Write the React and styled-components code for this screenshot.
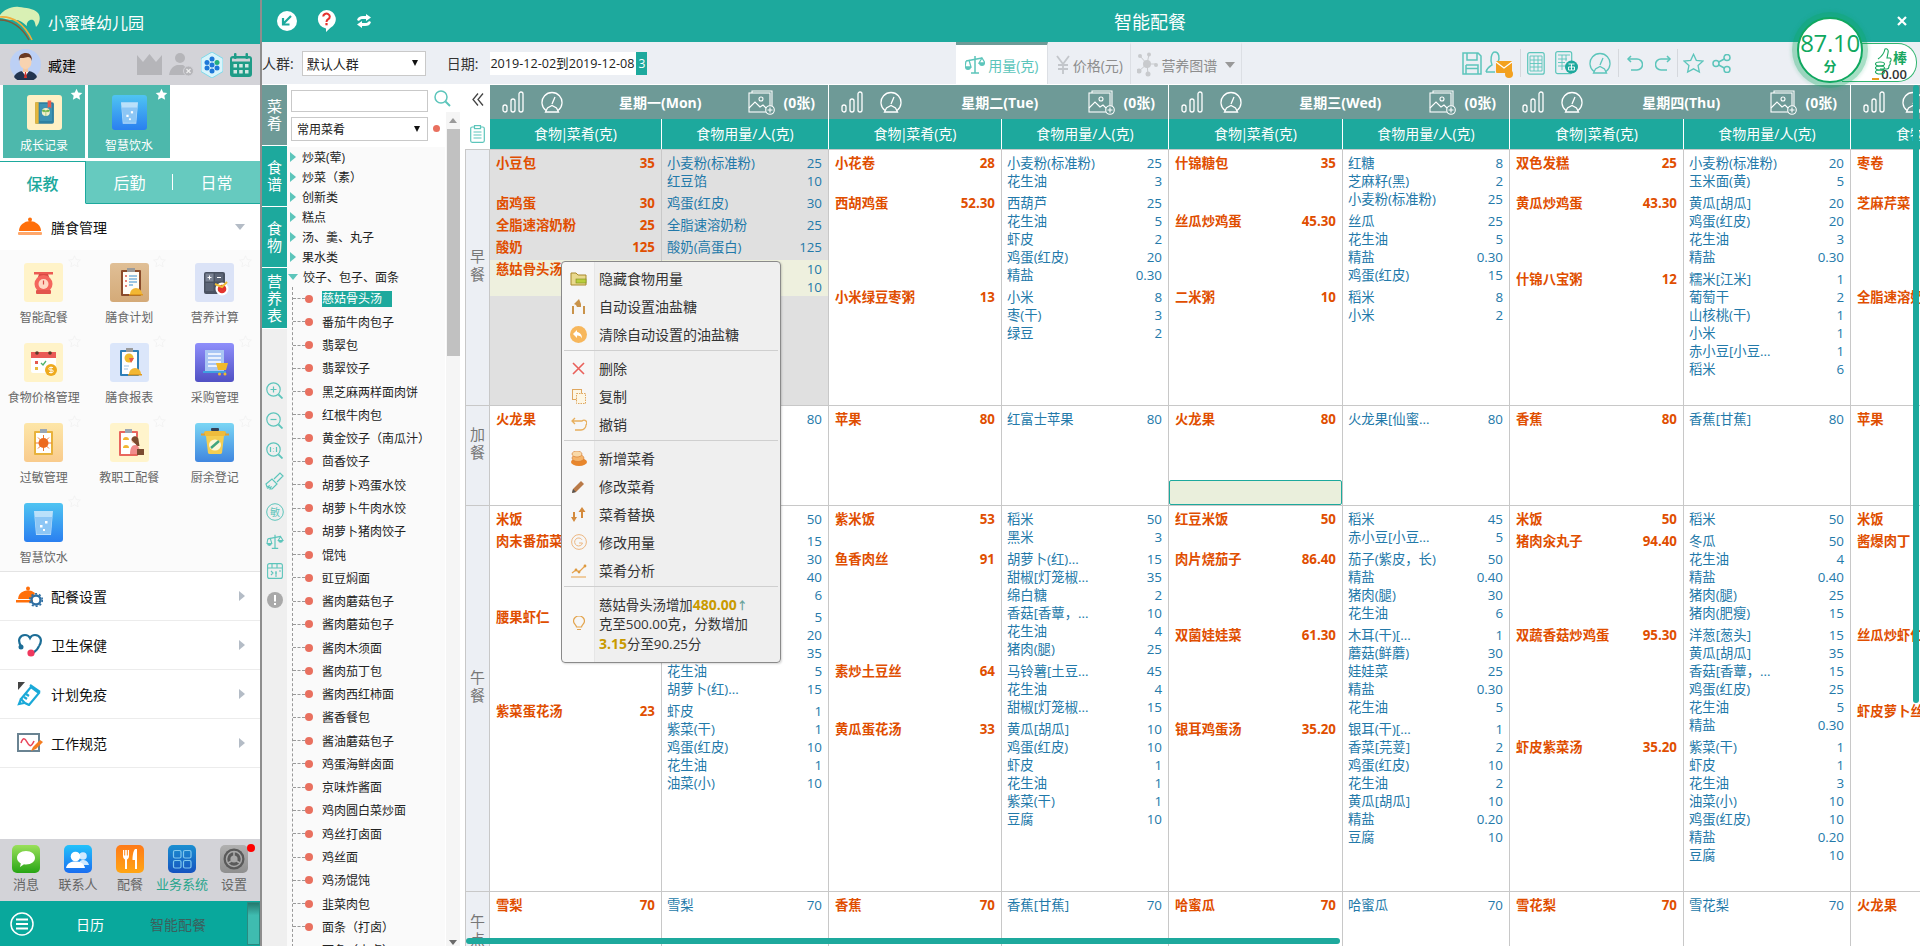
import React from 'react';
import styled, { createGlobalStyle } from 'styled-components';

const teal = '#1da99d';
const slate = '#6e9a97';
const line = '#c8c8c8';
const mint = '#5cc5bb';

const GlobalStyle = createGlobalStyle`
  html, body { margin: 0; padding: 0; background: #fff; }
  body { font-family: "Open Sans", "Noto Sans CJK SC", sans-serif; }
  * { box-sizing: border-box; }
`;

const Page = styled.div`
  position: relative;
  display: flex;
  width: 1920px;
  height: 946px;
  overflow: hidden;
`;

const Gap = styled.span`
  width: ${p => p.$w}px;
  flex-shrink: 0;
`;

/* ---------- left navigation ---------- */

const Nav = styled.aside`
  width: 262px;
  flex-shrink: 0;
  display: flex;
  flex-direction: column;
  border-right: 2px solid #8e8e8e;
  background: #fff;
`;

const Brand = styled.div`
  height: 44px;
  background: ${teal};
  color: #fff;
  font-size: 16px;
  display: flex;
  align-items: center;
  gap: 7px;
`;

const UserBar = styled.div`
  height: 41px;
  background: #d3d3d8;
  display: flex;
  align-items: center;
  padding: 0 8px 0 10px;
  font-size: 14px;
  color: #000;
`;

const UserName = styled.span`
  margin-left: 7px;
  margin-right: auto;
`;

const UserIcons = styled.div`
  display: flex;
  align-items: center;
  gap: 7px;
`;

const Shortcuts = styled.div`
  height: 76px;
  display: flex;
  gap: 3px;
  padding-left: 3px;
`;

const ShortcutCard = styled.div`
  position: relative;
  width: 82px;
  height: 73px;
  background: #4db8ac;
  color: #fff;
  font-size: 12px;
  display: flex;
  flex-direction: column;
  align-items: center;
  padding-top: 10px;
  gap: 6px;
`;

const CardStar = styled.svg`
  position: absolute;
  top: 3px;
  right: 2px;
`;

const Tabs = styled.div`
  height: 43px;
  display: flex;
  background: #66cabf;
  color: #fff;
  font-size: 16px;
`;

const Tab = styled.div`
  flex: ${p => (p.$active ? '0 0 86px' : '1')};
  display: flex;
  align-items: center;
  justify-content: center;
  position: relative;
  border-bottom: 1px solid ${p => (p.$active ? '#fff' : teal)};
  ${p => p.$active && `
    background: #fff;
    color: ${teal};
    font-weight: 500;
    border-top: 1px solid ${teal};
    border-right: 1px solid ${teal};
  `}
  ${p => p.$divided && `
    &::after {
      content: '';
      position: absolute;
      right: 0;
      top: 13px;
      height: 16px;
      width: 1px;
      background: #fff;
    }
  `}
`;

const MenuGroup = styled.div`
  height: ${p => p.$h || 49}px;
  display: flex;
  align-items: center;
  padding: 0 15px 0 16px;
  font-size: 14px;
  color: #111;
  gap: 8px;
  background: #fff;
  border-bottom: ${p => (p.$flat ? 'none' : '1px solid #ececec')};
`;

const GroupIcon = styled.span`
  width: 27px;
  height: 24px;
  display: flex;
  align-items: center;
  justify-content: center;
`;

const Caret = styled.span`
  margin-left: auto;
  width: 0;
  height: 0;
  ${p => p.$down
    ? 'border-left: 5.5px solid transparent; border-right: 5.5px solid transparent; border-top: 6px solid #b4bcc6;'
    : 'border-top: 5.5px solid transparent; border-bottom: 5.5px solid transparent; border-left: 6px solid #b4bcc6;'}
`;

const AppGrid = styled.div`
  height: 322px;
  background: #fbfbfb;
  padding: 13px 1px 0;
  display: grid;
  grid-template-columns: repeat(3, 85.5px);
  grid-auto-rows: 80px;
  border-bottom: 1px solid #e4e4e4;
`;

const AppItem = styled.div`
  position: relative;
  display: flex;
  flex-direction: column;
  align-items: center;
  gap: 6px;
  font-size: 12px;
  color: #666;
`;

const FaintStar = styled.svg`
  position: absolute;
  top: -8px;
  right: 6px;
`;

const Tile = styled.div`
  width: ${p => p.$size || 39}px;
  height: ${p => p.$size || 39}px;
  border-radius: 3px;
  background: ${p => p.$bg};
  display: flex;
  overflow: hidden;
`;

const NavFill = styled.div`
  flex: 1;
  background: #fff;
`;

const Dock = styled.div`
  height: 62px;
  background: #d3d3d8;
  display: grid;
  grid-template-columns: 52px 52px 52px 52px 52px;
  justify-content: space-between;
  padding: 6px 0 0;
`;

const DockItem = styled.div`
  position: relative;
  display: flex;
  flex-direction: column;
  align-items: center;
  gap: 2px;
  font-size: 13px;
  line-height: 18px;
  white-space: nowrap;
  color: ${p => (p.$active ? '#27a58c' : '#666')};
`;

const Badge = styled.span`
  position: absolute;
  top: -1px;
  right: 5px;
  width: 8px;
  height: 8px;
  border-radius: 50%;
  background: #ff0000;
`;

const TaskBar = styled.div`
  height: 45px;
  background: #09a89c;
  display: flex;
  align-items: center;
  padding-left: 10px;
  font-size: 14px;
  color: #fff;
`;

const TaskLabel = styled.span`
  margin-left: ${p => p.$ml}px;
  color: ${p => p.$color || '#fff'};
`;

const TaskHandle = styled.span`
  margin-left: auto;
  width: 13px;
  height: 43px;
  background: linear-gradient(#24796f, #3fbcb0 30%, #3fbcb0);
  border: 1px solid #2a8a80;
`;

/* ---------- main ---------- */

const Main = styled.main`
  flex: 1;
  min-width: 0;
  display: flex;
  flex-direction: column;
`;

const TitleBar = styled.header`
  height: 42px;
  flex-shrink: 0;
  background: ${teal};
  color: #fff;
  display: flex;
  align-items: center;
`;

const TitleTools = styled.div`
  width: 852px;
  padding-left: 15px;
  display: flex;
  align-items: center;
  gap: 20px;
`;

const Title = styled.h1`
  margin: 0;
  font-size: 18px;
  font-weight: 400;
`;

const CloseMark = styled.span`
  margin-left: auto;
  margin-right: 13px;
  display: flex;
`;

const FilterBar = styled.div`
  height: 42px;
  flex-shrink: 0;
  background: #eceff4;
  display: flex;
  align-items: center;
  font-size: 14px;
  color: #333;
  margin-bottom: 1px;
`;

const Picker = styled.div`
  width: ${p => p.$w}px;
  height: ${p => p.$h}px;
  border: 1px solid #c9c9c9;
  background: #fff;
  display: flex;
  align-items: center;
  justify-content: space-between;
  padding: 0 7px 0 ${p => p.$pl || 4}px;
  font-size: ${p => p.$fs || 13}px;
  color: #222;
  flex-shrink: 0;
`;

const PickerArrow = styled.span`
  width: 0;
  height: 0;
  border-left: 3.5px solid transparent;
  border-right: 3.5px solid transparent;
  border-top: 6px solid #111;
`;

const FilterLabel = styled.span`
  margin-left: ${p => p.$ml || 0}px;
  margin-right: ${p => p.$mr || 8}px;
  white-space: nowrap;
`;

const DateText = styled.span`
  background: #fff;
  height: 23px;
  width: 146px;
  line-height: 23px;
  font-size: 12.6px;
  color: #222;
  white-space: nowrap;
`;

const DateCount = styled.span`
  width: 11px;
  height: 23px;
  line-height: 23px;
  text-align: center;
  font-size: 12px;
  background: ${teal};
  color: #fff;
`;

const ViewTabs = styled.div`
  margin-left: 309px;
  height: 42px;
  display: flex;
  flex-shrink: 0;
`;

const ViewTab = styled.div`
  width: ${p => p.$w}px;
  display: flex;
  align-items: center;
  justify-content: center;
  gap: 3px;
  font-size: 14px;
  white-space: nowrap;
  color: ${p => (p.$active ? mint : '#8d8d8d')};
  background: ${p => (p.$active ? '#fff' : 'transparent')};
  border-top: 3px solid ${p => (p.$active ? slate : 'transparent')};
  border-right: 1px solid #dcdfe4;
`;

const ViewCaret = styled.span`
  margin-left: 5px;
  width: 0;
  height: 0;
  border-left: 5px solid transparent;
  border-right: 5px solid transparent;
  border-top: 6px solid #999;
`;

const ActionGroup = styled.div`
  margin-left: 220px;
  display: flex;
  align-items: center;
`;

const ActionSep = styled.span`
  width: 1px;
  height: 28px;
  background: #d5d8dd;
  margin: 0 ${p => p.$gap || 6}px;
`;

const Body = styled.div`
  flex: 1;
  min-height: 0;
  display: flex;
`;

/* tool rail */

const Rail = styled.div`
  width: 25px;
  flex-shrink: 0;
  display: flex;
  flex-direction: column;
  background: #efefef;
`;

const RailTab = styled.div`
  height: 61px;
  background: ${p => (p.$active ? slate : teal)};
  color: #fff;
  font-size: 15px;
  line-height: 17px;
  display: flex;
  align-items: center;
  justify-content: center;
  text-align: center;
  border-bottom: 1px solid #fff;
  padding: 0 5px;
`;

const RailTools = styled.div`
  margin-top: 53px;
  display: flex;
  flex-direction: column;
  align-items: center;
  gap: 13px;
`;

/* dish tree */

const TreePanel = styled.div`
  position: relative;
  width: 178px;
  flex-shrink: 0;
  display: flex;
  flex-direction: column;
  background: #fff;
`;

const SearchRow = styled.div`
  height: 32px;
  padding: 5px 0 0 4px;
  display: flex;
  align-items: flex-start;
  gap: 6px;
`;

const SearchBox = styled.div`
  width: 137px;
  height: 22px;
  border: 1px solid #c9c9c9;
  background: #fff;
  flex-shrink: 0;
`;

const SelectRow = styled.div`
  height: 30px;
  padding-left: 4px;
  display: flex;
  align-items: flex-start;
`;

const RedDot = styled.span`
  width: 7px;
  height: 7px;
  margin: 8px 0 0 5px;
  border-radius: 50%;
  background: #e9705f;
`;

const TreeBody = styled.div`
  flex: 1;
  min-height: 0;
  overflow: hidden;
  width: 158px;
  background: #fafafa;
  font-size: 12px;
  color: #222;
`;

const TreeGroup = styled.div`
  height: 20px;
  display: flex;
  align-items: center;
  white-space: nowrap;
  padding-left: ${p => (p.$open ? 1 : 3)}px;
  gap: ${p => (p.$open ? 5 : 6)}px;
`;

const TreeArrow = styled.span`
  width: 0;
  height: 0;
  ${p => p.$open
    ? `border-left: 5px solid transparent; border-right: 5px solid transparent; border-top: 6px solid ${mint};`
    : `border-top: 5px solid transparent; border-bottom: 5px solid transparent; border-left: 6px solid ${mint};`}
`;

const TreeLeaves = styled.div`
  margin-left: 5px;
  border-left: 1px dashed #9a9a9a;
`;

const TreeLeaf = styled.div`
  height: 23.27px;
  display: flex;
  align-items: center;
  white-space: nowrap;
  &::before {
    content: '';
    width: 12px;
    border-top: 1px dashed #9a9a9a;
  }
`;

const LeafDot = styled.span`
  width: 8px;
  height: 8px;
  border-radius: 50%;
  background: #e9705f;
  margin: 0 9px 0 0;
`;

const LeafText = styled.span`
  ${p => p.$on && `
    background: ${teal};
    color: #fff;
    width: 70px;
    height: 16px;
    line-height: 16px;
  `}
`;

const ScrollTrack = styled.div`
  position: absolute;
  top: 27px;
  right: 5px;
  bottom: 0;
  width: 14px;
  background: #f5f5f5;
`;

const ScrollThumb = styled.div`
  position: absolute;
  top: 17px;
  left: 1px;
  right: 0;
  height: 227px;
  background: #c1c1c1;
`;

const ScrollArrow = styled.span`
  position: absolute;
  left: 3px;
  ${p => (p.$down ? 'bottom: 1px;' : 'top: 6px;')}
  width: 0;
  height: 0;
  border-left: 4px solid transparent;
  border-right: 4px solid transparent;
  ${p => (p.$down ? 'border-top: 5px solid #6a6a6a;' : 'border-bottom: 5px solid #9a9a9a;')}
`;

/* weekly table */

const Schedule = styled.section`
  position: relative;
  flex: 1;
  min-width: 0;
  overflow: hidden;
  display: flex;
  flex-direction: column;
  background: #fff;
`;

const HeadRow = styled.div`
  display: flex;
  flex-shrink: 0;
`;

const Corner = styled.div`
  width: 25px;
  flex-shrink: 0;
  display: flex;
  flex-direction: column;
  align-items: center;
  padding-top: 8px;
  gap: 19px;
`;

const DayHead = styled.div`
  width: ${p => p.$w}px;
  flex-shrink: 0;
  border-right: 1px solid #fff;
`;

const DayTop = styled.div`
  height: 34px;
  background: ${slate};
  color: #fff;
  font-size: 14px;
  font-weight: 700;
  display: flex;
  align-items: center;
  padding: 0 13px 0 12px;
  white-space: nowrap;
`;

const DayName = styled.span`
  flex: 1;
  text-align: center;
  margin-left: 10px;
`;

const PhotoCount = styled.span`
  margin-left: 9px;
`;

const DayColumns = styled.div`
  height: 30px;
  background: ${teal};
  color: #fff;
  font-size: 14px;
  display: grid;
  grid-template-columns: 1fr 167px;
  line-height: 30px;
  text-align: center;
  white-space: nowrap;
`;

const ColumnTitle = styled.span`
  & + & { border-left: 1px solid #fff; }
`;

const BarTick = styled.span`
  margin: 0 -1.5px;
`;

const MealRow = styled.div`
  height: ${p => p.$h}px;
  flex-shrink: 0;
  display: flex;
  border-top: 1px solid ${line};
`;

const MealLabel = styled.div`
  width: 25px;
  flex-shrink: 0;
  background: #eceff4;
  border-left: 1px solid ${line};
  border-right: 1px solid ${line};
  color: #777;
  font-size: 15px;
  line-height: 18px;
  display: flex;
  align-items: center;
  justify-content: center;
  text-align: center;
  padding: 0 4px 26px;
`;

const DayCell = styled.div`
  position: relative;
  width: ${p => p.$w}px;
  flex-shrink: 0;
  padding-top: 4px;
  display: flex;
  flex-direction: column;
  gap: 4px;
  border-right: 1px solid ${line};
  background-color: ${p => (p.$shade ? '#e0e0e0' : '#fff')};
  background-image: linear-gradient(${line}, ${line});
  background-repeat: no-repeat;
  background-position: right 166px top 0;
  background-size: 1px 100%;
`;

const DishRow = styled.div`
  display: grid;
  grid-template-columns: 1fr 167px;
  background: ${p => (p.$picked ? '#eef0de' : 'transparent')};
`;

const DishName = styled.div`
  display: flex;
  justify-content: space-between;
  height: 18px;
  line-height: 18px;
  padding: 0 6px;
  font-size: 13.33px;
  font-weight: 700;
  color: #e04e00;
  white-space: nowrap;
  overflow: hidden;
`;

const PartList = styled.div`
  border-left: 1px solid ${line};
  padding: 0 6px 0 5px;
`;

const Part = styled.div`
  display: flex;
  justify-content: space-between;
  height: 18px;
  line-height: 18px;
  font-size: 13.33px;
  color: #2379a9;
  white-space: nowrap;
`;

const DropSlot = styled.div`
  position: absolute;
  left: 0;
  bottom: 0;
  width: 173px;
  height: 25px;
  background: #eaefdc;
  border: 1px solid ${teal};
  border-radius: 2px;
`;

const HorizontalBar = styled.div`
  position: absolute;
  left: 1px;
  bottom: 2px;
  width: 874px;
  height: 6px;
  border-radius: 3px;
  background: ${teal};
`;

const VerticalBar = styled.div`
  position: absolute;
  right: 1px;
  top: 0;
  width: 6px;
  height: 618px;
  border-radius: 3px;
  background: ${teal};
`;

/* context menu */

const ContextMenu = styled.div`
  position: absolute;
  left: 561px;
  top: 261px;
  width: 220px;
  height: 402px;
  padding: 2px 0 0;
  border: 1px solid #8a8a8a;
  border-radius: 4px;
  background: linear-gradient(90deg, #f6f6f6 32px, #e6e6e6 32px, #e6e6e6 33px, #efefef 33px);
  font-size: 14px;
  color: #333;
  box-shadow: 1px 1px 2px rgba(0, 0, 0, 0.15);
`;

const MenuRow = styled.div`
  height: 28px;
  display: flex;
  align-items: center;
  white-space: nowrap;
`;

const MenuIcon = styled.span`
  width: 33px;
  flex-shrink: 0;
  display: flex;
  align-items: center;
  justify-content: center;
  margin-right: 4px;
`;

const MenuSep = styled.div`
  height: 1px;
  margin: 2px 2px 3px;
  background: #cfcfcf;
`;

const MenuNote = styled.div`
  display: flex;
  align-items: center;
  height: 68px;
  margin-top: 1px;
`;

const NoteText = styled.div`
  font-size: 13.4px;
  line-height: 19px;
  width: 178px;
`;

const Gold = styled.b`
  color: #c99a00;
  font-size: 14px;
`;

const UpMark = styled.span`
  color: #6aa39d;
  font-size: 11px;
  font-weight: 700;
`;

/* score badge */

const ScoreWrap = styled.div`
  position: absolute;
  top: 12px;
  left: 1790px;
  width: 128px;
  height: 78px;
`;

const ScorePill = styled.div`
  position: absolute;
  top: 31px;
  left: 52px;
  width: 75px;
  height: 39px;
  background: #fff;
  border: 1px solid #2fb56f;
  border-left: none;
  border-top-right-radius: 19px;
  border-bottom-right-radius: 19px;
  display: flex;
  flex-direction: column;
  align-items: flex-end;
  padding: 5px 9px 0 0;
`;

const PillGood = styled.span`
  font-size: 14px;
  line-height: 18px;
  font-weight: 700;
  color: #18a75f;
`;

const PillValue = styled.span`
  font-size: 13px;
  line-height: 14px;
  font-weight: 600;
  color: #333;
  &::before {
    content: '';
    display: inline-block;
    width: 7px;
    height: 2px;
    margin-right: 2px;
    vertical-align: -1px;
    background: #e89c20;
  }
`;

const ThumbIcon = styled.svg`
  position: absolute;
  left: 85px;
  top: 35px;
`;

const ScoreCircle = styled.div`
  position: absolute;
  left: 7px;
  top: 5px;
  width: 66px;
  height: 66px;
  border-radius: 50%;
  background: #fff;
  border: 2px solid #10a860;
  box-shadow: 0 0 0 5px rgba(16, 168, 96, 0.28), 0 0 3px 7px rgba(16, 168, 96, 0.12);
  color: #10a860;
  display: flex;
  flex-direction: column;
  align-items: center;
  justify-content: flex-start;
`;

const ScoreValue = styled.span`
  font-size: 24px;
  line-height: 30px;
  margin-top: 9px;
  letter-spacing: -0.3px;
`;

const ScoreUnit = styled.span`
  font-size: 13px;
  line-height: 16px;
  font-weight: 700;
`;

const UndoSvg = styled.svg`
  ${p => p.$flip && 'transform: scaleX(-1);'}
`;

/* ---------- drawings ---------- */

const Star = ({ size = 13, fill = '#fff', stroke = 'none', ...rest }) => (
  <svg width={size} height={size} viewBox="0 0 24 24" {...rest}>
    <path d="M12 1.5l3.2 6.9 7.5.9-5.5 5.1 1.5 7.4L12 18.1l-6.7 3.7 1.5-7.4L1.3 9.3l7.5-.9z" fill={fill} stroke={stroke} strokeWidth="1.5" />
  </svg>
);

const Logo = () => (
  <svg width="41" height="40" viewBox="0 0 41 40">
    <path d="M0 13C4 8 11 4 19 5c7 1 14 1 19 6 3 4 2 10-2 14-1-3-1-6-3-7-3-1-7 2-6 6-4-3-8-7-14-6C8 18 3 16 0 16z" fill="#d9f0b4" />
    <path d="M0 15c12-1 24 6 32 23" fill="none" stroke="#f0ad3c" strokeWidth="1.6" />
    <path d="M0 18c11 0 22 7 29 20" fill="none" stroke="#7d5b3a" strokeWidth="1.4" />
  </svg>
);

const Avatar = () => (
  <svg width="31" height="31" viewBox="0 0 31 31">
    <circle cx="15.5" cy="15.5" r="15.5" fill="#bcd0f5" />
    <path d="M4 28c2-5 6-6 11.5-6S25 23 27 28a15 15 0 0 1-23 0z" fill="#22344f" />
    <path d="M12 22l3.5 5 3.5-5z" fill="#fff" />
    <path d="M15 23h1l1 6h-3z" fill="#d8352c" />
    <rect x="13" y="17" width="5" height="6" fill="#f3c7a0" />
    <ellipse cx="15.5" cy="13" rx="6" ry="7" fill="#f8d3b0" />
    <path d="M9 12c-1-6 3-8 7-8s6 3 6 8c-1-3-2-4-4-4-3 1-7 1-8 1z" fill="#6a3a24" />
  </svg>
);

const Crown = () => (
  <svg width="25" height="21" viewBox="0 0 25 21">
    <path d="M0 1l6 7 6.5-8L19 8l6-7v20H0z" fill="#b5b5b9" />
  </svg>
);

const UserOff = () => (
  <svg width="25" height="25" viewBox="0 0 25 25">
    <circle cx="11" cy="6" r="5" fill="#b5b5b9" />
    <path d="M0 23c1-6 4-9 8-10h6c2 1 3 3 3 4v6z" fill="#b5b5b9" />
    <circle cx="19.5" cy="19" r="5" fill="#b5b5b9" stroke="#d3d3d8" />
    <path d="M17.5 17l4 4m0-4l-4 4" stroke="#eee" strokeWidth="1.2" />
  </svg>
);

const HexBadge = () => (
  <svg width="22" height="26" viewBox="0 0 22 26">
    <path d="M11 0l11 6.5v13L11 26 0 19.500v-13z" fill="#d8f4fb" stroke="#7fd9ea" />
    <g fill="#1e78d8">
      <circle cx="11" cy="7" r="2.500" />
      <circle cx="6" cy="10.500" r="2.500" />
      <circle cx="6" cy="16" r="2.500" />
      <circle cx="11" cy="19" r="2.500" />
      <circle cx="16" cy="16" r="2.500" />
    </g>
    <circle cx="16" cy="10.500" r="2.500" fill="#23b07d" />
    <circle cx="11" cy="13" r="2.500" fill="#1e78d8" />
  </svg>
);

const CalendarIcon = () => (
  <svg width="22" height="24" viewBox="0 0 22 24">
    <rect x="0" y="3" width="22" height="21" rx="3" fill="#1f9c87" />
    <rect x="2" y="5.500" width="18" height="3" fill="#d3d3d8" />
    <rect x="4" y="0" width="2.500" height="6" rx="1" fill="#1f9c87" />
    <rect x="15.500" y="0" width="2.500" height="6" rx="1" fill="#1f9c87" />
    <g fill="#d3e8e3">
      <rect x="3.500" y="11" width="3.500" height="3.500" />
      <rect x="9.200" y="11" width="3.500" height="3.500" />
      <rect x="15" y="11" width="3.500" height="3.500" />
      <rect x="3.500" y="17" width="3.500" height="3.500" />
      <rect x="9.200" y="17" width="3.500" height="3.500" />
      <rect x="15" y="17" width="3.500" height="3.500" />
    </g>
  </svg>
);

const Art = ({ children }) => (
  <svg width="100%" height="100%" viewBox="0 0 39 39">{children}</svg>
);

const artBook = (
  <Art>
    <rect x="9" y="8" width="21" height="24" rx="2" fill="#2f7fa0" />
    <rect x="9" y="8" width="4" height="24" fill="#e3b63d" />
    <rect x="14" y="10" width="14" height="19" fill="#3d93b3" />
    <path d="M23 6h4v9l-2-2-2 2z" fill="#ea5a4d" />
    <circle cx="21" cy="19" r="4.500" fill="#f4f0c9" />
    <path d="M21 24v-6m0 0c-2-2-3-1-4-1 0 2 2 2 4 1zm0 0c2-2 3-1 4-1 0 2-2 2-4 1z" fill="#6bb34a" stroke="#6bb34a" strokeWidth=".6" />
  </Art>
);

const artWater = (
  <Art>
    <path d="M10 8h19l-2 24H12z" fill="#cfe9fb" opacity=".85" />
    <path d="M11 14h17l-1.500 17h-14z" fill="#8cc6f5" />
    <rect x="21" y="18" width="2.500" height="2.500" fill="#fff" />
    <rect x="16" y="22" width="2.500" height="2.500" fill="#fff" />
    <rect x="19" y="26" width="2" height="2" fill="#fff" />
  </Art>
);

const artScale = (
  <Art>
    <path d="M10 9h19v2.500H10z" fill="#ec5a52" />
    <path d="M15 11h9l1 3H14z" fill="#d94a44" />
    <circle cx="19.500" cy="21" r="9" fill="#f4665d" />
    <circle cx="19.500" cy="21" r="5" fill="#ffd9c4" />
    <path d="M19.500 17.500v4" stroke="#d94a44" strokeWidth="1.200" />
    <rect x="12" y="27" width="15" height="4" rx="1" fill="#e2544c" />
  </Art>
);

const artPlan = (
  <Art>
    <rect x="11" y="7" width="20" height="26" rx="1" fill="#8a4b2a" />
    <rect x="13" y="9" width="16" height="22" fill="#fffdf6" />
    <rect x="17" y="5" width="8" height="4" fill="#9a9a9a" />
    <g stroke="#e05a4e" strokeWidth="1.300"><path d="M15 13h2M15 18h2M15 23h2" /></g>
    <g stroke="#7bb3dd" strokeWidth="1.300"><path d="M19 13h8M19 16h8M19 19h8M19 22h4" /></g>
    <path d="M20 31a6 6 0 0 1 12 0z" fill="#f2b733" />
    <rect x="19" y="31" width="14" height="1.500" fill="#e09a20" />
  </Art>
);

const artCalc = (
  <Art>
    <rect x="9" y="9" width="21" height="22" rx="2" fill="#4a5262" />
    <rect x="10.500" y="10.500" width="8" height="8" fill="#7b8394" />
    <rect x="20" y="10.500" width="8" height="8" fill="#5c6577" />
    <rect x="10.500" y="20" width="8" height="8" fill="#5c6577" />
    <path d="M12.500 14.500h4M14.500 12.500v4M22 14.500h4" stroke="#fff" strokeWidth="1" />
    <circle cx="27" cy="26" r="6.500" fill="#fff" />
    <circle cx="27" cy="26" r="4.300" fill="#e3342f" />
    <path d="M20 21l7 3 5-5" stroke="#eebc38" strokeWidth="2" fill="none" />
  </Art>
);

const artPrice = (
  <Art>
    <rect x="7" y="11" width="25" height="19" rx="2" fill="#fff" />
    <rect x="7" y="9" width="25" height="6" fill="#ea5a55" />
    <circle cx="13" cy="10" r="1.800" fill="#5b3a2a" />
    <circle cx="26" cy="10" r="1.800" fill="#5b3a2a" />
    <rect x="11" y="18" width="3" height="3" fill="#e4574f" />
    <path d="M17 20l2 2 3-4" stroke="#4fb26b" fill="none" strokeWidth="1.300" />
    <rect x="11" y="24" width="3" height="3" fill="#e8b93a" />
    <circle cx="27" cy="27" r="6" fill="#eeaa1d" />
    <path d="M29 24.500h-3a1.200 1.200 0 0 0 0 2.500h2a1.200 1.200 0 0 1 0 2.500h-3M27 23.500v7" fill="none" stroke="#fff" strokeWidth=".9" />
  </Art>
);

const artReport = (
  <Art>
    <rect x="10" y="7" width="19" height="26" rx="1" fill="#2f7fb7" />
    <rect x="12" y="9" width="15" height="22" fill="#fff" />
    <rect x="16" y="5" width="7" height="4" fill="#9a9a9a" />
    <circle cx="19" cy="15" r="4.500" fill="#f1bb2e" />
    <path d="M19 15h5l-3 5z" fill="#e9574c" />
    <path d="M14 23h5M14 26h4" stroke="#9cc4e4" strokeWidth="1.200" />
    <path d="M19 31a6 6 0 0 1 12 0z" fill="#f2b733" />
    <rect x="18" y="31" width="14" height="1.500" fill="#e09a20" />
  </Art>
);

const artBuy = (
  <Art>
    <rect x="10" y="7" width="19" height="22" fill="#a9c6f4" />
    <rect x="8" y="28" width="23" height="2" fill="#3f9fe0" />
    <g stroke="#fff" strokeWidth="1.300"><path d="M13 11h13M13 15h13M13 19h13M13 23h9" /></g>
    <path d="M21 20h12l-2 7H23z" fill="#f0b92c" />
    <circle cx="24.500" cy="31" r="1.500" fill="#f0b92c" />
    <circle cx="30" cy="31" r="1.500" fill="#f0b92c" />
  </Art>
);

const artAllergy = (
  <Art>
    <rect x="10" y="8" width="19" height="24" rx="1" fill="#e8b23c" />
    <rect x="12" y="10" width="15" height="20" fill="#fff" />
    <rect x="16" y="6" width="7" height="4" fill="#9aa6b4" />
    <circle cx="19.500" cy="20" r="5" fill="#ec6a1e" />
    <path d="M19.500 12v16M11.500 20h16M14 14.500l11 11M25 14.500l-11 11" stroke="#ec6a1e" strokeWidth=".9" />
  </Art>
);

const artStaff = (
  <Art>
    <rect x="9" y="8" width="19" height="25" rx="1" fill="#e9665e" />
    <rect x="11" y="10" width="15" height="21" fill="#fff" />
    <rect x="15" y="6" width="7" height="4" fill="#9aa6b4" />
    <path d="M13 17a3 3 0 0 1 6 0zM13 25a3 3 0 0 1 6 0z" fill="#f2b733" />
    <circle cx="25" cy="17" r="3.500" fill="#f2c6a8" />
    <path d="M21.500 17c0-5 7-5 7 0l1 6h-2z" fill="#7a4a30" />
    <path d="M20 31c0-6 2-9 5-9s5 3 5 9z" fill="#f08b8b" />
    <rect x="27" y="26" width="7" height="6" fill="#7a4a30" />
  </Art>
);

const artWaste = (
  <Art>
    <rect x="16" y="5" width="8" height="3" rx="1" fill="#333f55" />
    <rect x="9" y="8" width="22" height="5" rx="2" fill="#eebc3c" />
    <rect x="6" y="10.500" width="4" height="2" fill="#e4a030" />
    <rect x="30" y="10.500" width="4" height="2" fill="#e4a030" />
    <path d="M11 13h18l-2 17a2 2 0 0 1-2 1H15a2 2 0 0 1-2-1z" fill="#f4ce52" />
    <ellipse cx="20" cy="22" rx="6" ry="5.500" fill="#fff7d8" />
    <path d="M16 25l8-7" stroke="#43a57e" strokeWidth="2.500" />
  </Art>
);

const Bubble = () => (
  <svg width="28" height="28" viewBox="0 0 28 28">
    <defs><linearGradient id="gMsg" x1="0" y1="0" x2="0" y2="1"><stop offset="0" stopColor="#9ae05a" /><stop offset="1" stopColor="#27a514" /></linearGradient></defs>
    <rect width="28" height="28" rx="5" fill="url(#gMsg)" />
    <path d="M14 6c5.500 0 9 3 9 6.800s-3.500 6.700-9 6.700c-.8 0-1.500 0-2-.2L8 22l.8-3.500C6.500 17.200 5 15.200 5 12.800 5 9 8.500 6 14 6z" fill="#fff" />
  </svg>
);

const Contacts = () => (
  <svg width="28" height="28" viewBox="0 0 28 28">
    <defs><linearGradient id="gCon" x1="0" y1="0" x2="0" y2="1"><stop offset="0" stopColor="#22c2fb" /><stop offset="1" stopColor="#1a6df0" /></linearGradient></defs>
    <rect width="28" height="28" rx="5" fill="url(#gCon)" />
    <circle cx="19" cy="11" r="3.800" fill="#cfe9ff" />
    <path d="M14 20c1-4 3-5 5-5s5 1 6 5z" fill="#cfe9ff" />
    <circle cx="11.500" cy="11.500" r="4.800" fill="#fff" />
    <path d="M2 23c1-5 5-6.500 9.500-6.500S20 18 21 23z" fill="#fff" />
  </svg>
);

const Cutlery = () => (
  <svg width="28" height="28" viewBox="0 0 28 28">
    <defs><linearGradient id="gCut" x1="0" y1="0" x2="0" y2="1"><stop offset="0" stopColor="#ff7a18" /><stop offset="1" stopColor="#ffa615" /></linearGradient></defs>
    <rect width="28" height="28" rx="5" fill="url(#gCut)" />
    <path d="M7 5v6c0 2 1 3 2 3.500V24h2V14.500c1-.5 2-1.500 2-3.500V5h-1.200v5.500h-1V5H9.200v5.500h-1V5z" fill="#fff" />
    <path d="M19 4c-2 2-2.500 8-2.500 11H19v9h2V4z" fill="#fff" />
  </svg>
);

const AppsIcon = () => (
  <svg width="28" height="28" viewBox="0 0 28 28">
    <defs><linearGradient id="gApp" x1="0" y1="0" x2="0" y2="1"><stop offset="0" stopColor="#1b8fd0" /><stop offset="1" stopColor="#1553c0" /></linearGradient></defs>
    <rect width="28" height="28" rx="5" fill="url(#gApp)" />
    <g fill="none" stroke="#7fc7ee" strokeWidth="1.200">
      <rect x="5.500" y="5.500" width="7.500" height="7.500" rx="1.500" />
      <rect x="15.500" y="5.500" width="7.500" height="7.500" rx="1.500" />
      <rect x="5.500" y="15.500" width="7.500" height="7.500" rx="1.500" />
      <rect x="15.500" y="15.500" width="7.500" height="7.500" rx="1.500" />
    </g>
  </svg>
);

const GearIcon = () => (
  <svg width="28" height="28" viewBox="0 0 28 28">
    <defs><linearGradient id="gGear" x1="0" y1="0" x2="0" y2="1"><stop offset="0" stopColor="#b0b0b0" /><stop offset="1" stopColor="#8f8f8f" /></linearGradient></defs>
    <rect width="28" height="28" rx="5" fill="url(#gGear)" />
    <circle cx="14" cy="14" r="10.500" fill="#5a5a5a" />
    <circle cx="14" cy="14" r="7.500" fill="none" stroke="#a8a8a8" strokeWidth="1.500" />
    <circle cx="14" cy="14" r="3.600" fill="#a8a8a8" />
    <path d="M14 7v4M8 18l3.500-2M20 18l-3.500-2" stroke="#a8a8a8" strokeWidth="1.600" />
  </svg>
);

const Dome = () => (
  <svg width="24" height="20" viewBox="0 0 24 20">
    <circle cx="12" cy="2.500" r="2" fill="#ff6f0a" />
    <path d="M1 14a11 10 0 0 1 22 0z" fill="#ff6f0a" />
    <rect y="15" width="24" height="3" rx="1" fill="#ffa76a" />
  </svg>
);

const DomeGear = () => (
  <svg width="27" height="21" viewBox="0 0 27 21">
    <circle cx="12" cy="2.500" r="2" fill="#ff6f0a" />
    <path d="M2 13a10 9 0 0 1 17-6l-3 6z" fill="#ff6f0a" />
    <rect y="14" width="17" height="2.500" fill="#ff6f0a" />
    <circle cx="20" cy="14" r="4.500" fill="none" stroke="#2f6fa3" strokeWidth="2.400" />
    <circle cx="20" cy="14" r="6.300" fill="none" stroke="#2f6fa3" strokeWidth="1.600" strokeDasharray="2 2" />
  </svg>
);

const Stethoscope = () => (
  <svg width="26" height="24" viewBox="0 0 26 24">
    <path d="M4 13C0 7 3 2 8 2c2 0 4 1 5 3 1-2 3-3 5-3 5 0 8 5 4 11" fill="none" stroke="#1c6d96" strokeWidth="2.200" />
    <circle cx="4" cy="14" r="2.500" fill="#1c6d96" />
    <path d="M22 13c-1 3-3 5-6 7" fill="none" stroke="#1c6d96" strokeWidth="2.200" />
    <circle cx="14" cy="20" r="3.600" fill="#f0385e" />
  </svg>
);

const Syringe = () => (
  <svg width="26" height="24" viewBox="0 0 26 24">
    <path d="M1 0h7L1 8z" fill="#444" />
    <g fill="none" stroke="#1aa9d8" strokeWidth="2.200">
      <path d="M13 3l10 7M4 17L14 5l8 6-10 12-4-2z" />
      <path d="M4 17l-2 5 5-1" />
      <path d="M9 12l3 2M7 15l3 2" />
    </g>
  </svg>
);

const ChartPen = () => (
  <svg width="26" height="20" viewBox="0 0 26 20">
    <rect x="1" y="1" width="21" height="17" fill="#fff" stroke="#6a8392" strokeWidth="2" />
    <path d="M4 10c2-6 4-5 6-1s4 6 7-1" fill="none" stroke="#e9455a" strokeWidth="1.600" />
    <path d="M14 18l2-4 7-7 3 2-7 7z" fill="#f47d20" />
  </svg>
);

const Hamburger = () => (
  <svg width="24" height="24" viewBox="0 0 24 24">
    <circle cx="12" cy="12" r="11" fill="none" stroke="#fff" strokeWidth="1.500" />
    <path d="M6 7.500h12M6 12h12M6 16.500h12" stroke="#fff" strokeWidth="1.800" />
  </svg>
);

const BackCircle = () => (
  <svg width="20" height="20" viewBox="0 0 20 20">
    <circle cx="10" cy="10" r="10" fill="#fff" />
    <path d="M14 5L6.500 12.500M6 7v6.500h6.500" fill="none" stroke={teal} strokeWidth="2.200" />
  </svg>
);

const HelpBubble = () => (
  <svg width="19" height="22" viewBox="0 0 19 22">
    <path d="M9.500 0a9.300 9.300 0 0 1 4 17.700L9 22v-3.500A9.300 9.300 0 0 1 9.500 0z" fill="#fff" />
    <path d="M6.200 6.500a3.300 3 0 1 1 5 2.700c-1.200.8-1.700 1.300-1.700 2.800" fill="none" stroke="#e6322e" strokeWidth="2" />
    <rect x="8.400" y="13" width="2.200" height="2.300" fill="#e6322e" />
  </svg>
);

const SwapArrows = () => (
  <svg width="16" height="14" viewBox="0 0 16 14">
    <path d="M1 6c1-3 3-4 6-4h3V0l5 3.500L10 7V5H7C5 5 4 5.500 3 7zM15 8c-1 3-3 4-6 4H6v2L1 10.500 6 7v2h3c2 0 3-.5 4-2z" fill="#fff" />
  </svg>
);

const Cross = () => (
  <svg width="10" height="10" viewBox="0 0 10 10">
    <path d="M1 1l8 8m0-8l-8 8" stroke="#fff" strokeWidth="2.200" />
  </svg>
);

const ScaleIcon = ({ color = mint, w = 20, h = 20 }) => (
  <svg width={w} height={h} viewBox="0 0 20 20">
    <path d="M1 6l16-3M10 1v17M6 18h8" stroke={color} strokeWidth="1.500" fill="none" />
    <path d="M1 6l-1 6h6L4 5M17 3l-3 5h6z" fill="none" stroke={color} strokeWidth="1.300" />
    <path d="M0 12a3 3 0 0 0 6 0zM14 8a3 3 0 0 0 6 0z" fill={color} />
  </svg>
);

const YenIcon = () => (
  <svg width="14" height="20" viewBox="0 0 14 20" fill="none" stroke="#c3c6cb" strokeWidth="1.800">
    <path d="M1 1l6 8 6-8M7 9v10M2 10h10M2 14h10" />
  </svg>
);

const NodesIcon = () => (
  <svg width="21" height="25" viewBox="0 0 21 25">
    <g fill="#c8cacd">
      <circle cx="10" cy="12" r="4" />
      <circle cx="3" cy="4" r="2" />
      <circle cx="12" cy="2.500" r="2" />
      <circle cx="2" cy="19" r="2.500" />
      <circle cx="11" cy="22" r="2.500" />
      <circle cx="19" cy="13" r="2" />
    </g>
    <path d="M3 4l7 8 2-9.500M10 12l-8 7M10 12l1 10M10 12h9" stroke="#c8cacd" fill="none" />
  </svg>
);

const Stroke = ({ w, h, vb, children, color = mint, width = 1.5 }) => (
  <svg width={w} height={h} viewBox={vb} fill="none" stroke={color} strokeWidth={width}>{children}</svg>
);

const SaveIcon = () => (
  <Stroke w={20} h={23} vb="0 0 20 23">
    <path d="M1 1h15l3 3v18H1zM5 1v7h10V1M4 13h12v9M4 13v9M4 16.500h12" />
  </Stroke>
);

const MailUser = () => (
  <svg width="29" height="29" viewBox="0 0 29 29">
    <g fill="none" stroke={mint} strokeWidth="1.500">
      <path d="M1 23c1-4 3-5 6-7-2-4-1-13 3-13 4 0 5 6 3 10" />
      <path d="M1 23h9" />
    </g>
    <rect x="11" y="12" width="16" height="12" rx="1" fill="#f3a11f" />
    <path d="M11 13l8 6 8-6" fill="none" stroke="#fff" strokeWidth="1.200" />
    <circle cx="24" cy="25" r="4" fill="#f3a11f" />
  </svg>
);

const SheetIcon = () => (
  <Stroke w={18} h={23} vb="0 0 18 23" width={1.200}>
    <rect x=".7" y=".7" width="16.500" height="21.500" rx="2" />
    <path d="M3 4h12v15H3zM3 8h12M3 11.500h12M3 15h12M7 4v15M11 4v15" strokeWidth=".9" />
  </Stroke>
);

const SheetUser = () => (
  <svg width="23" height="24" viewBox="0 0 23 24">
    <g fill="none" stroke={mint} strokeWidth="1.200">
      <rect x=".7" y=".7" width="16" height="22" rx="2" />
      <path d="M3 4h12M3 8h9M3 11.500h7M3 15h7M7 4v15M11 4v6" strokeWidth=".9" />
    </g>
    <circle cx="16.500" cy="16" r="6.500" fill={teal} />
    <path d="M13.500 13h6M13.500 16h6v3h-6zM16.500 13v6" stroke="#fff" fill="none" strokeWidth=".9" />
  </svg>
);

const Gauge = ({ size = 22, color = mint }) => (
  <svg width={size} height={size} viewBox="0 0 22 22" fill="none" stroke={color} strokeWidth="1.300">
    <path d="M5 19.500a10 10 0 1 1 12 0" />
    <path d="M4.500 21h13l-2-4-4.500-2.500L6.500 17z" />
    <path d="M11 13l3-7" />
  </svg>
);

const Undo = ({ flip }) => (
  <UndoSvg $flip={flip} width="17" height="17" viewBox="0 0 17 17" fill="none" stroke={mint} strokeWidth="1.500">
    <path d="M2 4h9a5 5 0 0 1 0 11H5" />
    <path d="M5 1L2 4l3 3" />
  </UndoSvg>
);

const ShareIcon = () => (
  <Stroke w={19} h={19} vb="0 0 19 19">
    <circle cx="4" cy="9.500" r="3" />
    <circle cx="15" cy="3.500" r="3" />
    <circle cx="15" cy="15.500" r="3" />
    <path d="M6.700 8l5.600-3M6.700 11l5.600 3" />
  </Stroke>
);

const SearchIcon = () => (
  <Stroke w={17} h={17} vb="0 0 17 17">
    <circle cx="7" cy="7" r="6" />
    <path d="M11.500 11.500L16 16" strokeWidth="2" />
  </Stroke>
);

const DoubleChevron = () => (
  <svg width="12" height="13" viewBox="0 0 12 13" fill="none" stroke="#444" strokeWidth="1.300">
    <path d="M6 .500L1 6.500l5 6M11 .500l-5 6 5 6" />
  </svg>
);

const ClipIcon = () => (
  <Stroke w={15} h={18} vb="0 0 15 18" width={1.200}>
    <rect x=".7" y="2" width="13.600" height="15.300" rx="1.500" />
    <rect x="4.500" y=".6" width="6" height="3" fill="#fff" />
    <path d="M3.500 7h8M3.500 10h8M3.500 13h8" />
  </Stroke>
);

const RailZoom = ({ children }) => (
  <svg width="17" height="17" viewBox="0 0 17 17" fill="none" stroke={mint} strokeWidth="1.200">
    <circle cx="7.500" cy="7.500" r="6.700" />
    <path d="M12.500 12.500L16.500 16.500" strokeWidth="1.800" />
    {children}
  </svg>
);

const Brush = () => (
  <Stroke w={19} h={18} vb="0 0 19 18" width={1.200}>
    <path d="M1 12l6-5 5 5-5 5H5l1-2-3 1 1-2-2 1zM9 7l6-6 3 3-6 6" />
  </Stroke>
);

const AllergyMark = () => (
  <svg width="18" height="18" viewBox="0 0 18 18">
    <circle cx="9" cy="9" r="8.300" fill="none" stroke={mint} strokeWidth="1" />
    <text x="9" y="12.500" fontSize="10" textAnchor="middle" fill={mint} fontFamily="Noto Sans CJK SC">敏</text>
  </svg>
);

const MoneyIcon = () => (
  <Stroke w={16} h={16} vb="0 0 16 16" width={1.100}>
    <rect x=".6" y=".6" width="14.800" height="14.800" rx="2" />
    <path d="M1 5h14M5 1v4M10 1v4M4 8l2 2-2 2M8 10h2M9 8v6M12 8h2" />
  </Stroke>
);

const AlertDot = () => (
  <svg width="16" height="16" viewBox="0 0 16 16">
    <circle cx="8" cy="8" r="8" fill="#a9a9a9" />
    <rect x="7" y="3" width="2" height="6.500" fill="#fff" />
    <rect x="7" y="11" width="2" height="2" fill="#fff" />
  </svg>
);

const BarsIcon = () => (
  <svg width="23" height="22" viewBox="0 0 23 22" fill="none" stroke="#fff" strokeWidth="1.300">
    <rect x="1" y="14" width="4" height="7" rx="2" />
    <rect x="9" y="8" width="4" height="13" rx="2" />
    <rect x="17" y="1" width="4" height="20" rx="2" />
  </svg>
);

const PhotoAdd = () => (
  <svg width="27" height="25" viewBox="0 0 27 25" fill="none" stroke="#fff" strokeWidth="1.100">
    <path d="M4 3V1h20v15" />
    <rect x="1" y="3" width="21" height="19" />
    <path d="M1 18l6-6 5 5 3-2 5 5" />
    <circle cx="13" cy="9" r="2" />
    <circle cx="22" cy="20" r="4.300" fill={slate} />
    <path d="M19.500 20h5M22 17.500v5" />
  </svg>
);

const FolderMenu = () => (
  <svg width="17" height="15" viewBox="0 0 17 15">
    <path d="M1 2h5l2 2h8v10H1z" fill="#e9d98e" stroke="#a8892d" />
    <rect x="6" y="8" width="10" height="4" fill="#b9cf3c" stroke="#7d8a1f" strokeWidth=".6" />
  </svg>
);

const AutoMenu = () => (
  <svg width="15" height="15" viewBox="0 0 15 15">
    <path d="M8 0L3 5l2 1 1 2h4V5zM1 7h2v8H1zM12 7h2v8h-2z" fill="#c9934a" />
  </svg>
);

const BackMenu = () => (
  <svg width="17" height="17" viewBox="0 0 17 17">
    <circle cx="8.500" cy="8.500" r="8.500" fill="#f7b75c" />
    <path d="M7 4L3 8l4 4V9.500c3 0 4 1 5 3 0-4-2-6-5-6.500z" fill="#fff" />
  </svg>
);

const CrossMenu = () => (
  <svg width="13" height="13" viewBox="0 0 13 13">
    <path d="M1 1l11 11m0-11L1 12" stroke="#e9605a" strokeWidth="1.600" />
  </svg>
);

const CopyMenu = () => (
  <svg width="14" height="15" viewBox="0 0 14 15" fill="#fdf6e4" stroke="#e0a860">
    <rect x=".5" y=".5" width="9" height="10" />
    <rect x="4.500" y="4.500" width="9" height="10" strokeDasharray="1.500 1" />
  </svg>
);

const UndoMenu = () => (
  <svg width="16" height="14" viewBox="0 0 16 14" fill="none" stroke="#e7ae5c" strokeWidth="1.300">
    <path d="M4 1L1 4l3 3M1 4h10a2.500 2.500 0 0 1 4 4 5 5 0 0 1-5 5H4" />
  </svg>
);

const BreadMenu = () => (
  <svg width="16" height="15" viewBox="0 0 16 15">
    <ellipse cx="8" cy="11" rx="8" ry="4" fill="#e8862c" />
    <ellipse cx="7" cy="7" rx="6" ry="3.500" fill="#f5b46a" stroke="#d2762a" strokeWidth=".6" />
    <ellipse cx="6" cy="3" rx="5" ry="3" fill="#f9d9a8" stroke="#d2762a" strokeWidth=".6" />
  </svg>
);

const PenMenu = () => (
  <svg width="13" height="13" viewBox="0 0 13 13">
    <path d="M0 13l1-4 8-8 3 3-8 8z" fill="#b97a48" />
    <path d="M0 13l1-4 3 3z" fill="#555" />
  </svg>
);

const SwapMenu = () => (
  <svg width="15" height="15" viewBox="0 0 15 15">
    <path d="M3 15L0 10h2V5h2v5h2zM11 0l3.500 5H12v6h-2V5H7.500z" fill="#d48a3c" />
  </svg>
);

const RingMenu = () => (
  <svg width="16" height="16" viewBox="0 0 16 16" fill="none" stroke="#edb781">
    <circle cx="8" cy="8" r="7.400" />
    <path d="M11 5.800a4 4 0 1 0 .5 3.200H8" />
  </svg>
);

const TrendMenu = () => (
  <svg width="16" height="15" viewBox="0 0 16 15">
    <path d="M1 10l4-3 3 2 6-6" fill="none" stroke="#e8a24a" strokeWidth="1.200" />
    <circle cx="5" cy="7" r="1.400" fill="#dd9a40" />
    <circle cx="8" cy="9" r="1.400" fill="#dd9a40" />
    <circle cx="14" cy="3" r="1.400" fill="#dd9a40" />
    <rect x="0" y="13.500" width="15" height="1" fill="#e8a24a" />
  </svg>
);

const BulbMenu = () => (
  <svg width="12" height="16" viewBox="0 0 12 16" fill="none" stroke="#e3a44d" strokeWidth="1.200">
    <path d="M3.500 11c0-2-3-3-3-6a5.500 5 0 0 1 11 0c0 3-3 4-3 6zM4 13.500h4" />
  </svg>
);

const Thumb = () => (
  <ThumbIcon width="17" height="29" viewBox="0 0 17 29" fill="none" stroke="#18a75f" strokeWidth="1.100">
    <path d="M3 12c3-2 6-5 7-10 2-1 4 1 3 4l-1 5h3c2 1 1 3 0 4 1 2 0 3-1 4 0 2-1 3-2 3H5" />
    <ellipse cx="5" cy="17" rx="4.500" ry="2" />
    <ellipse cx="5" cy="21" rx="4.500" ry="2" />
    <ellipse cx="5" cy="25" rx="4.500" ry="2" />
  </ThumbIcon>
);

/* ---------- data ---------- */

const apps = [
  ['智能配餐', '#fff3c8', artScale],
  ['膳食计划', 'linear-gradient(#e0bf96,#d4aa78)', artPlan],
  ['营养计算', '#dbe3f7', artCalc],
  ['食物价格管理', '#fff3c8', artPrice],
  ['膳食报表', '#dbe6fa', artReport],
  ['采购管理', 'linear-gradient(#8f8ffb,#5050c4)', artBuy],
  ['过敏管理', 'linear-gradient(#fde6a8,#f9cb8c)', artAllergy],
  ['教职工配餐', '#fff4cc', artStaff],
  ['厨余登记', 'linear-gradient(#7bd6f4,#3f86e0)', artWaste],
  ['智慧饮水', 'linear-gradient(#4fc4f2,#2a7ff0)', artWater],
];

const leaves = [
  '慈姑骨头汤', '番茄牛肉包子', '翡翠包', '翡翠饺子', '黑芝麻两样面肉饼', '红根牛肉包',
  '黄金饺子（南瓜汁）', '茴香饺子', '胡萝卜鸡蛋水饺', '胡萝卜牛肉水饺', '胡萝卜猪肉饺子', '馄饨',
  '豇豆焖面', '酱肉蘑菇包子', '酱肉蘑茹包子', '酱肉木须面', '酱肉茄丁包', '酱肉西红柿面',
  '酱香餐包', '酱油蘑菇包子', '鸡蛋海鲜卤面', '京味炸酱面', '鸡肉圆白菜炒面', '鸡丝打卤面',
  '鸡丝面', '鸡汤馄饨', '韭菜肉包', '面条（打卤）', '面条（小卤）',
];

const treeGroups = ['炒菜(荤)', '炒菜（素）', '创新类', '糕点', '汤、羹、丸子', '果水类'];

// blank rows hold the height of dishes whose parts the picture does not show
const blanks = (n, amounts = []) => Array.from({ length: n }, (_, i) => ['', amounts[i] || '']);

const dayHeads = [
  { name: '星期一(Mon)', w: 339, shade: true },
  { name: '星期二(Tue)', w: 340 },
  { name: '星期三(Wed)', w: 341 },
  { name: '星期四(Thu)', w: 341 },
  { name: '星期五(Fri)', w: 341 },
];

const meals = [
  {
    label: '早餐',
    h: 256,
    days: [
      [
        ['小豆包', '35', [['小麦粉(标准粉)', '25'], ['红豆馅', '10']]],
        ['卤鸡蛋', '30', [['鸡蛋(红皮)', '30']]],
        ['全脂速溶奶粉', '25', [['全脂速溶奶粉', '25']]],
        ['酸奶', '125', [['酸奶(高蛋白)', '125']]],
        ['慈姑骨头汤', '', blanks(2, ['10', '10']), true],
      ],
      [
        ['小花卷', '28', [['小麦粉(标准粉)', '25'], ['花生油', '3']]],
        ['西胡鸡蛋', '52.30', [['西葫芦', '25'], ['花生油', '5'], ['虾皮', '2'], ['鸡蛋(红皮)', '20'], ['精盐', '0.30']]],
        ['小米绿豆枣粥', '13', [['小米', '8'], ['枣(干)', '3'], ['绿豆', '2']]],
      ],
      [
        ['什锦糖包', '35', [['红糖', '8'], ['芝麻籽(黑)', '2'], ['小麦粉(标准粉)', '25']]],
        ['丝瓜炒鸡蛋', '45.30', [['丝瓜', '25'], ['花生油', '5'], ['精盐', '0.30'], ['鸡蛋(红皮)', '15']]],
        ['二米粥', '10', [['稻米', '8'], ['小米', '2']]],
      ],
      [
        ['双色发糕', '25', [['小麦粉(标准粉)', '20'], ['玉米面(黄)', '5']]],
        ['黄瓜炒鸡蛋', '43.30', [['黄瓜[胡瓜]', '20'], ['鸡蛋(红皮)', '20'], ['花生油', '3'], ['精盐', '0.30']]],
        ['什锦八宝粥', '12', [['糯米[江米]', '1'], ['葡萄干', '2'], ['山核桃(干)', '1'], ['小米', '1'], ['赤小豆[小豆...', '1'], ['稻米', '6']]],
      ],
      [
        ['枣卷', '', blanks(2)],
        ['芝麻芹菜', '', blanks(5)],
        ['全脂速溶奶粉', '', blanks(1)],
      ],
    ],
  },
  {
    label: '加餐',
    h: 100,
    days: [
      [['火龙果', '', blanks(1, ['80'])]],
      [['苹果', '80', [['红富士苹果', '80']]]],
      [['火龙果', '80', [['火龙果[仙蜜...', '80']]]],
      [['香蕉', '80', [['香蕉[甘蕉]', '80']]]],
      [['苹果', '', blanks(1)]],
    ],
    slotDay: 2,
  },
  {
    label: '午餐',
    h: 386,
    days: [
      [
        ['米饭', '', blanks(1, ['50'])],
        ['肉末番茄菜', '', blanks(4, ['15', '30', '40', '6'])],
        ['腰果虾仁', '', [['', '5'], ['', '20'], ['', '35'], ['花生油', '5'], ['胡萝卜(红)...', '15']]],
        ['紫菜蛋花汤', '23', [['虾皮', '1'], ['紫菜(干)', '1'], ['鸡蛋(红皮)', '10'], ['花生油', '1'], ['油菜(小)', '10']]],
      ],
      [
        ['紫米饭', '53', [['稻米', '50'], ['黑米', '3']]],
        ['鱼香肉丝', '91', [['胡萝卜(红)...', '15'], ['甜椒[灯笼椒...', '35'], ['绵白糖', '2'], ['香菇[香蕈，...', '10'], ['花生油', '4'], ['猪肉(腿)', '25']]],
        ['素炒土豆丝', '64', [['马铃薯[土豆...', '45'], ['花生油', '4'], ['甜椒[灯笼椒...', '15']]],
        ['黄瓜蛋花汤', '33', [['黄瓜[胡瓜]', '10'], ['鸡蛋(红皮)', '10'], ['虾皮', '1'], ['花生油', '1'], ['紫菜(干)', '1'], ['豆腐', '10']]],
      ],
      [
        ['红豆米饭', '50', [['稻米', '45'], ['赤小豆[小豆...', '5']]],
        ['肉片烧茄子', '86.40', [['茄子(紫皮，长)', '50'], ['精盐', '0.40'], ['猪肉(腿)', '30'], ['花生油', '6']]],
        ['双菌娃娃菜', '61.30', [['木耳(干)[...', '1'], ['蘑菇(鲜蘑)', '30'], ['娃娃菜', '25'], ['精盐', '0.30'], ['花生油', '5']]],
        ['银耳鸡蛋汤', '35.20', [['银耳(干)[...', '1'], ['香菜[芫荽]', '2'], ['鸡蛋(红皮)', '10'], ['花生油', '2'], ['黄瓜[胡瓜]', '10'], ['精盐', '0.20'], ['豆腐', '10']]],
      ],
      [
        ['米饭', '50', [['稻米', '50']]],
        ['猪肉汆丸子', '94.40', [['冬瓜', '50'], ['花生油', '4'], ['精盐', '0.40'], ['猪肉(腿)', '25'], ['猪肉(肥瘦)', '15']]],
        ['双蔬香菇炒鸡蛋', '95.30', [['洋葱[葱头]', '15'], ['黄瓜[胡瓜]', '35'], ['香菇[香蕈，...', '15'], ['鸡蛋(红皮)', '25'], ['花生油', '5'], ['精盐', '0.30']]],
        ['虾皮紫菜汤', '35.20', [['紫菜(干)', '1'], ['虾皮', '1'], ['花生油', '3'], ['油菜(小)', '10'], ['鸡蛋(红皮)', '10'], ['精盐', '0.20'], ['豆腐', '10']]],
      ],
      [
        ['米饭', '', blanks(1)],
        ['酱爆肉丁', '', blanks(5)],
        ['丝瓜炒虾仁', '', blanks(4)],
        ['虾皮萝卜丝', '', blanks(4)],
      ],
    ],
  },
  {
    label: '午点',
    h: 102,
    days: [
      [['雪梨', '70', [['雪梨', '70']]]],
      [['香蕉', '70', [['香蕉[甘蕉]', '70']]]],
      [['哈蜜瓜', '70', [['哈蜜瓜', '70']]]],
      [['雪花梨', '70', [['雪花梨', '70']]]],
      [['火龙果', '', blanks(1)]],
    ],
  },
];

const menuGroups = [
  [
    [<FolderMenu />, '隐藏食物用量'],
    [<AutoMenu />, '自动设置油盐糖'],
    [<BackMenu />, '清除自动设置的油盐糖'],
  ],
  [
    [<CrossMenu />, '删除'],
    [<CopyMenu />, '复制'],
    [<UndoMenu />, '撤销'],
  ],
  [
    [<BreadMenu />, '新增菜肴'],
    [<PenMenu />, '修改菜肴'],
    [<SwapMenu />, '菜肴替换'],
    [<RingMenu />, '修改用量'],
    [<TrendMenu />, '菜肴分析'],
  ],
];

/* ---------- page parts ---------- */

const LeftNav = () => (
  <Nav>
    <Brand>
      <Logo />
      小蜜蜂幼儿园
    </Brand>
    <UserBar>
      <Avatar />
      <UserName>臧建</UserName>
      <UserIcons>
        <Crown />
        <UserOff />
        <HexBadge />
        <CalendarIcon />
      </UserIcons>
    </UserBar>
    <Shortcuts>
      <ShortcutCard>
        <CardStar as={Star} size={13} />
        <Tile $size={35} $bg="#fff0c4">{artBook}</Tile>
        成长记录
      </ShortcutCard>
      <ShortcutCard>
        <CardStar as={Star} size={13} />
        <Tile $size={35} $bg="linear-gradient(#4fc4f2,#2a7ff0)">{artWater}</Tile>
        智慧饮水
      </ShortcutCard>
    </Shortcuts>
    <Tabs>
      <Tab $active>保教</Tab>
      <Tab $divided>后勤</Tab>
      <Tab>日常</Tab>
    </Tabs>
    <MenuGroup $h={46} $flat>
      <GroupIcon><Dome /></GroupIcon>
      膳食管理
      <Caret $down />
    </MenuGroup>
    <AppGrid>
      {apps.map(([label, bg, art]) => (
        <AppItem key={label}>
          <FaintStar as={Star} size={13} fill="none" stroke="#f2f2f2" />
          <Tile $bg={bg}>{art}</Tile>
          {label}
        </AppItem>
      ))}
    </AppGrid>
    <MenuGroup>
      <GroupIcon><DomeGear /></GroupIcon>
      配餐设置
      <Caret />
    </MenuGroup>
    <MenuGroup>
      <GroupIcon><Stethoscope /></GroupIcon>
      卫生保健
      <Caret />
    </MenuGroup>
    <MenuGroup>
      <GroupIcon><Syringe /></GroupIcon>
      计划免疫
      <Caret />
    </MenuGroup>
    <MenuGroup>
      <GroupIcon><ChartPen /></GroupIcon>
      工作规范
      <Caret />
    </MenuGroup>
    <NavFill />
    <Dock>
      <DockItem><Bubble />消息</DockItem>
      <DockItem><Contacts />联系人</DockItem>
      <DockItem><Cutlery />配餐</DockItem>
      <DockItem $active><AppsIcon />业务系统</DockItem>
      <DockItem><GearIcon /><Badge />设置</DockItem>
    </Dock>
    <TaskBar>
      <Hamburger />
      <TaskLabel $ml={42}>日历</TaskLabel>
      <TaskLabel $ml={46} $color="#3c5f5c">智能配餐</TaskLabel>
      <TaskHandle />
    </TaskBar>
  </Nav>
);

const Filters = () => (
  <FilterBar>
    <FilterLabel>人群:</FilterLabel>
    <Picker $w={124} $h={25} $pl={4}>默认人群<PickerArrow /></Picker>
    <FilterLabel $ml={21} $mr={12}>日期:</FilterLabel>
    <DateText>2019-12-02到2019-12-08</DateText>
    <DateCount>3</DateCount>
    <ViewTabs>
      <ViewTab $active $w={92}><ScaleIcon />用量(克)</ViewTab>
      <ViewTab $w={83}><YenIcon />价格(元)</ViewTab>
      <ViewTab $w={111}><NodesIcon />营养图谱<ViewCaret /></ViewTab>
    </ViewTabs>
    <ActionGroup>
      <SaveIcon />
      <Gap $w={3} />
      <MailUser />
      <ActionSep />
      <SheetIcon />
      <Gap $w={10} />
      <SheetUser />
      <Gap $w={11} />
      <Gauge />
      <ActionSep $gap={7} />
      <Undo />
      <Gap $w={12} />
      <Undo flip />
      <ActionSep $gap={5} />
      <Star size={21} fill="none" stroke={mint} />
      <Gap $w={8} />
      <ShareIcon />
    </ActionGroup>
  </FilterBar>
);

const SideRail = () => (
  <Rail>
    <RailTab $active>菜肴</RailTab>
    <RailTab>食谱</RailTab>
    <RailTab>食物</RailTab>
    <RailTab>营养表</RailTab>
    <RailTools>
      <RailZoom><path d="M4.500 7.500h6M7.500 4.500v6" /></RailZoom>
      <RailZoom><path d="M4.500 7.500h6" /></RailZoom>
      <RailZoom><path d="M4.500 5v5M10.500 5v5M7.500 6v.5M7.500 9v.5" /></RailZoom>
      <Brush />
      <AllergyMark />
      <ScaleIcon w={18} h={16} />
      <MoneyIcon />
      <AlertDot />
    </RailTools>
  </Rail>
);

const DishTree = () => (
  <TreePanel>
    <SearchRow>
      <SearchBox />
      <SearchIcon />
    </SearchRow>
    <SelectRow>
      <Picker $w={137} $h={24} $pl={5} $fs={12}>常用菜肴<PickerArrow /></Picker>
      <RedDot />
    </SelectRow>
    <TreeBody>
      {treeGroups.map(name => (
        <TreeGroup key={name}><TreeArrow />{name}</TreeGroup>
      ))}
      <TreeGroup $open><TreeArrow $open />饺子、包子、面条</TreeGroup>
      <TreeLeaves>
        {leaves.map((name, i) => (
          <TreeLeaf key={name}>
            <LeafDot />
            <LeafText $on={i === 0}>{name}</LeafText>
          </TreeLeaf>
        ))}
      </TreeLeaves>
    </TreeBody>
    <ScrollTrack>
      <ScrollArrow />
      <ScrollThumb />
      <ScrollArrow $down />
    </ScrollTrack>
  </TreePanel>
);

const Dish = ({ name, grams, parts, picked }) => (
  <DishRow $picked={picked}>
    <DishName><span>{name}</span><span>{grams}</span></DishName>
    <PartList>
      {parts.map(([part, amount], i) => (
        <Part key={i}><span>{part}</span><span>{amount}</span></Part>
      ))}
    </PartList>
  </DishRow>
);

const WeekTable = () => (
  <Schedule>
    <HeadRow>
      <Corner>
        <DoubleChevron />
        <ClipIcon />
      </Corner>
      {dayHeads.map(day => (
        <DayHead key={day.name} $w={day.w}>
          <DayTop>
            <BarsIcon />
            <Gap $w={16} />
            <Gauge size={22} color="#fff" />
            <DayName>{day.name}</DayName>
            <PhotoAdd />
            <PhotoCount>(0张)</PhotoCount>
          </DayTop>
          <DayColumns>
            <ColumnTitle>食物<BarTick>|</BarTick>菜肴(克)</ColumnTitle>
            <ColumnTitle>食物用量/人(克)</ColumnTitle>
          </DayColumns>
        </DayHead>
      ))}
    </HeadRow>
    {meals.map(meal => (
      <MealRow key={meal.label} $h={meal.h}>
        <MealLabel>{meal.label}</MealLabel>
        {meal.days.map((dishes, i) => (
          <DayCell key={i} $w={dayHeads[i].w} $shade={meal.label === '早餐' && dayHeads[i].shade}>
            {dishes.map(([name, grams, parts, picked]) => (
              <Dish key={name} name={name} grams={grams} parts={parts} picked={picked} />
            ))}
            {meal.slotDay === i && <DropSlot />}
          </DayCell>
        ))}
      </MealRow>
    ))}
    <HorizontalBar />
    <VerticalBar />
  </Schedule>
);

const DishMenu = () => (
  <ContextMenu>
    {menuGroups.map((rows, g) => (
      <React.Fragment key={g}>
        {rows.map(([icon, label]) => (
          <MenuRow key={label}>
            <MenuIcon>{icon}</MenuIcon>
            {label}
          </MenuRow>
        ))}
        <MenuSep />
      </React.Fragment>
    ))}
    <MenuNote>
      <MenuIcon><BulbMenu /></MenuIcon>
      <NoteText>
        慈姑骨头汤增加<Gold>480.00</Gold><UpMark>↑</UpMark>
        <br />
        克至500.00克，分数增加
        <br />
        <Gold>3.15</Gold>分至90.25分
      </NoteText>
    </MenuNote>
  </ContextMenu>
);

const Score = () => (
  <ScoreWrap>
    <ScorePill>
      <PillGood>棒</PillGood>
      <PillValue>0.00</PillValue>
    </ScorePill>
    <Thumb />
    <ScoreCircle>
      <ScoreValue>87.10</ScoreValue>
      <ScoreUnit>分</ScoreUnit>
    </ScoreCircle>
  </ScoreWrap>
);

export default function App() {
  return (
    <Page>
      <GlobalStyle />
      <LeftNav />
      <Main>
        <TitleBar>
          <TitleTools>
            <BackCircle />
            <HelpBubble />
            <SwapArrows />
          </TitleTools>
          <Title>智能配餐</Title>
          <CloseMark><Cross /></CloseMark>
        </TitleBar>
        <Filters />
        <Body>
          <SideRail />
          <DishTree />
          <WeekTable />
        </Body>
      </Main>
      <DishMenu />
      <Score />
    </Page>
  );
}
